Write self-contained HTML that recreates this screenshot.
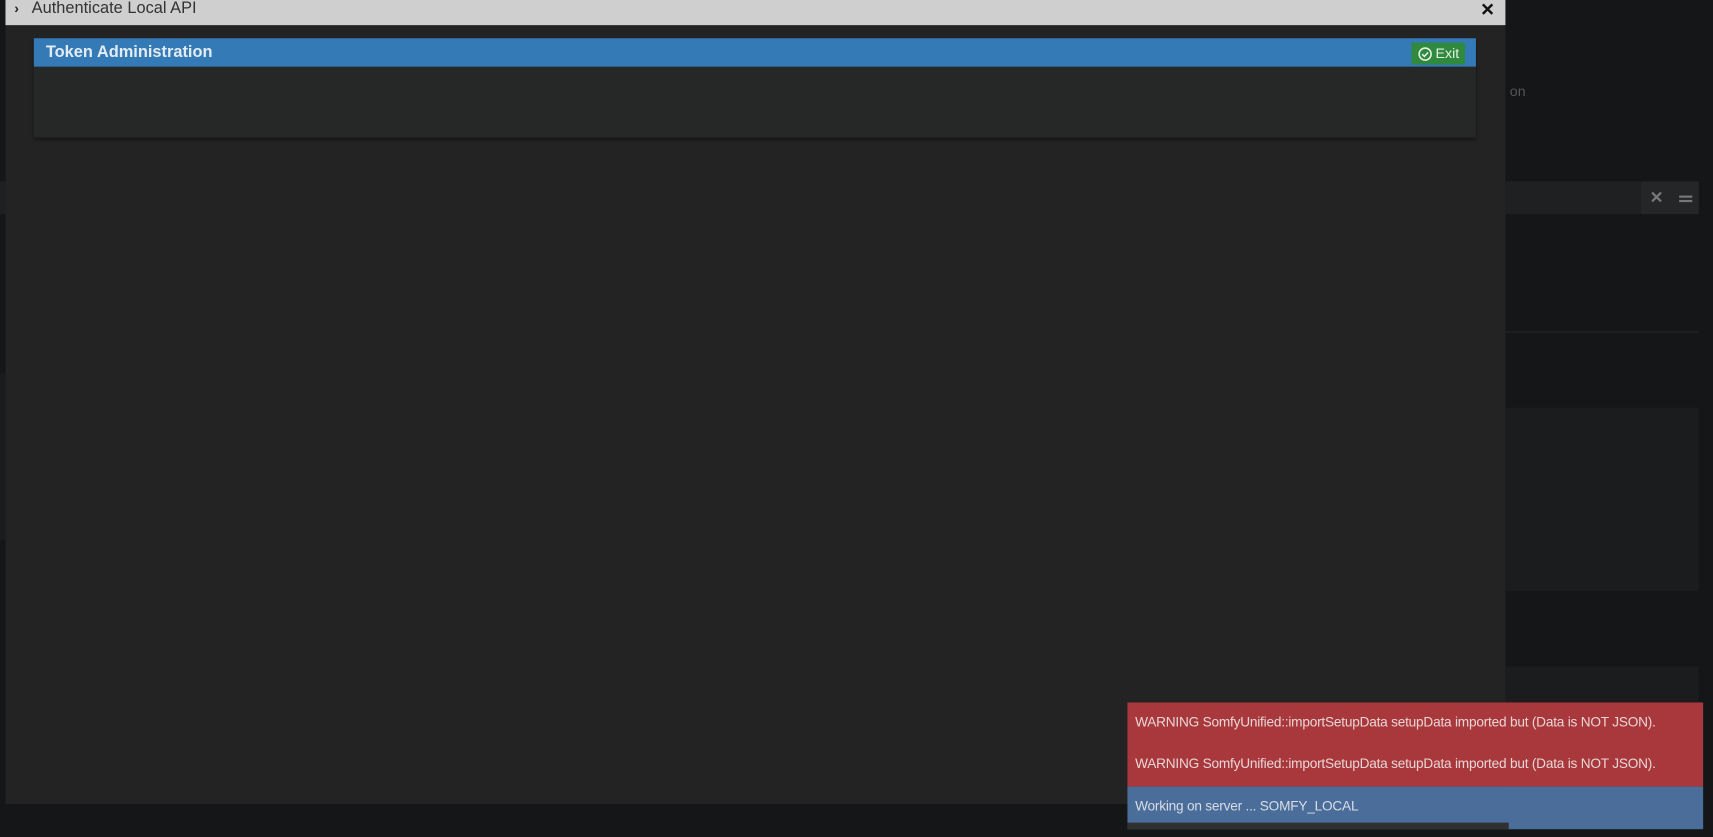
<!DOCTYPE html>
<html><head><style>
body{margin:0;width:1713px;height:837px;background:#151618;position:relative;overflow:hidden;font-family:"Liberation Sans",sans-serif;}
#w{position:absolute;left:0;top:0;width:1568px;height:766px;transform:scale(1.09247);transform-origin:0 0}
.a{position:absolute}
</style></head><body><div id="w">
<div class="a" style="left:1378px;top:166px;width:177px;height:30px;background:#1f2022"></div>
<div class="a" style="left:1502px;top:166px;width:53px;height:30px;background:#252628"></div>
<div class="a" style="left:1510px;top:172px;color:#777;font-size:15px;font-weight:bold">✕</div>
<div class="a" style="left:1537px;top:179px;width:12px;height:2px;background:#777;box-shadow:0 4px 0 #777"></div>
<div class="a" style="left:1378px;top:303px;width:177px;height:2px;background:#1d1e20"></div>
<div class="a" style="left:1378px;top:373px;width:177px;height:168px;background:#1b1c1e"></div>
<div class="a" style="left:1378px;top:610px;width:177px;height:150px;background:#1b1c1e"></div>
<div class="a" style="left:1382px;top:76px;color:#555;font-size:13px">on</div>
<div class="a" style="left:0;top:166px;width:5px;height:30px;background:#1f2022"></div>
<div class="a" style="left:0;top:342px;width:5px;height:152px;background:#1b1c1e"></div>
<div class="a" style="left:5px;top:0;width:1373px;height:736px;background:#232323"></div>
<div class="a" style="left:5px;top:0;width:1373px;height:23px;background:#cfcfcf"></div>
<div class="a" style="left:13px;top:0;font-size:13px;font-weight:bold;color:#222">›</div>
<div class="a" style="left:29px;top:-1px;font-size:15px;color:#333">Authenticate Local API</div>
<div class="a" style="left:1355px;top:-1px;font-size:16px;font-weight:bold;color:#111">✕</div>
<div class="a" style="left:31px;top:35px;width:1320px;height:91px;background:#262727;box-shadow:0 2px 3px rgba(0,0,0,.4)"></div>
<div class="a" style="left:31px;top:35px;width:1320px;height:26px;background:#337ab7"></div>
<div class="a" style="left:42px;top:39px;font-size:15px;font-weight:bold;color:#e4ecf3">Token Administration</div>
<div class="a" style="left:1292px;top:39px;width:49px;height:20px;background:#2f8a3e;color:#e6f0e6;font-size:13px;line-height:20px">
<svg style="position:absolute;left:6px;top:4px" width="13" height="13" viewBox="0 0 13 13"><circle cx="6.5" cy="6.5" r="5.5" fill="none" stroke="#e6f0e6" stroke-width="1.4"/><path d="M3.8 6.6l2 2 3.4-3.6" fill="none" stroke="#e6f0e6" stroke-width="1.4"/></svg>
<span style="position:absolute;left:22px">Exit</span></div>
<div class="a" style="left:1032px;top:643px;width:527px;height:77px;background:#a9383c"></div>
<div class="a" style="left:1032px;top:720px;width:527px;height:39px;background:#4a6d99"></div>
<div class="a" style="left:1032px;top:753px;width:349px;height:6px;background:#303030"></div>
<div class="a" style="left:1039px;top:654px;font-size:12.5px;color:#e8d6d6;letter-spacing:-0.2px">WARNING SomfyUnified::importSetupData setupData imported but (Data is NOT JSON).</div>
<div class="a" style="left:1039px;top:692px;font-size:12.5px;color:#e8d6d6;letter-spacing:-0.2px">WARNING SomfyUnified::importSetupData setupData imported but (Data is NOT JSON).</div>
<div class="a" style="left:1039px;top:731px;font-size:12.5px;color:#d8dde6;letter-spacing:-0.2px">Working on server ... SOMFY_LOCAL</div>
</div></body></html>
